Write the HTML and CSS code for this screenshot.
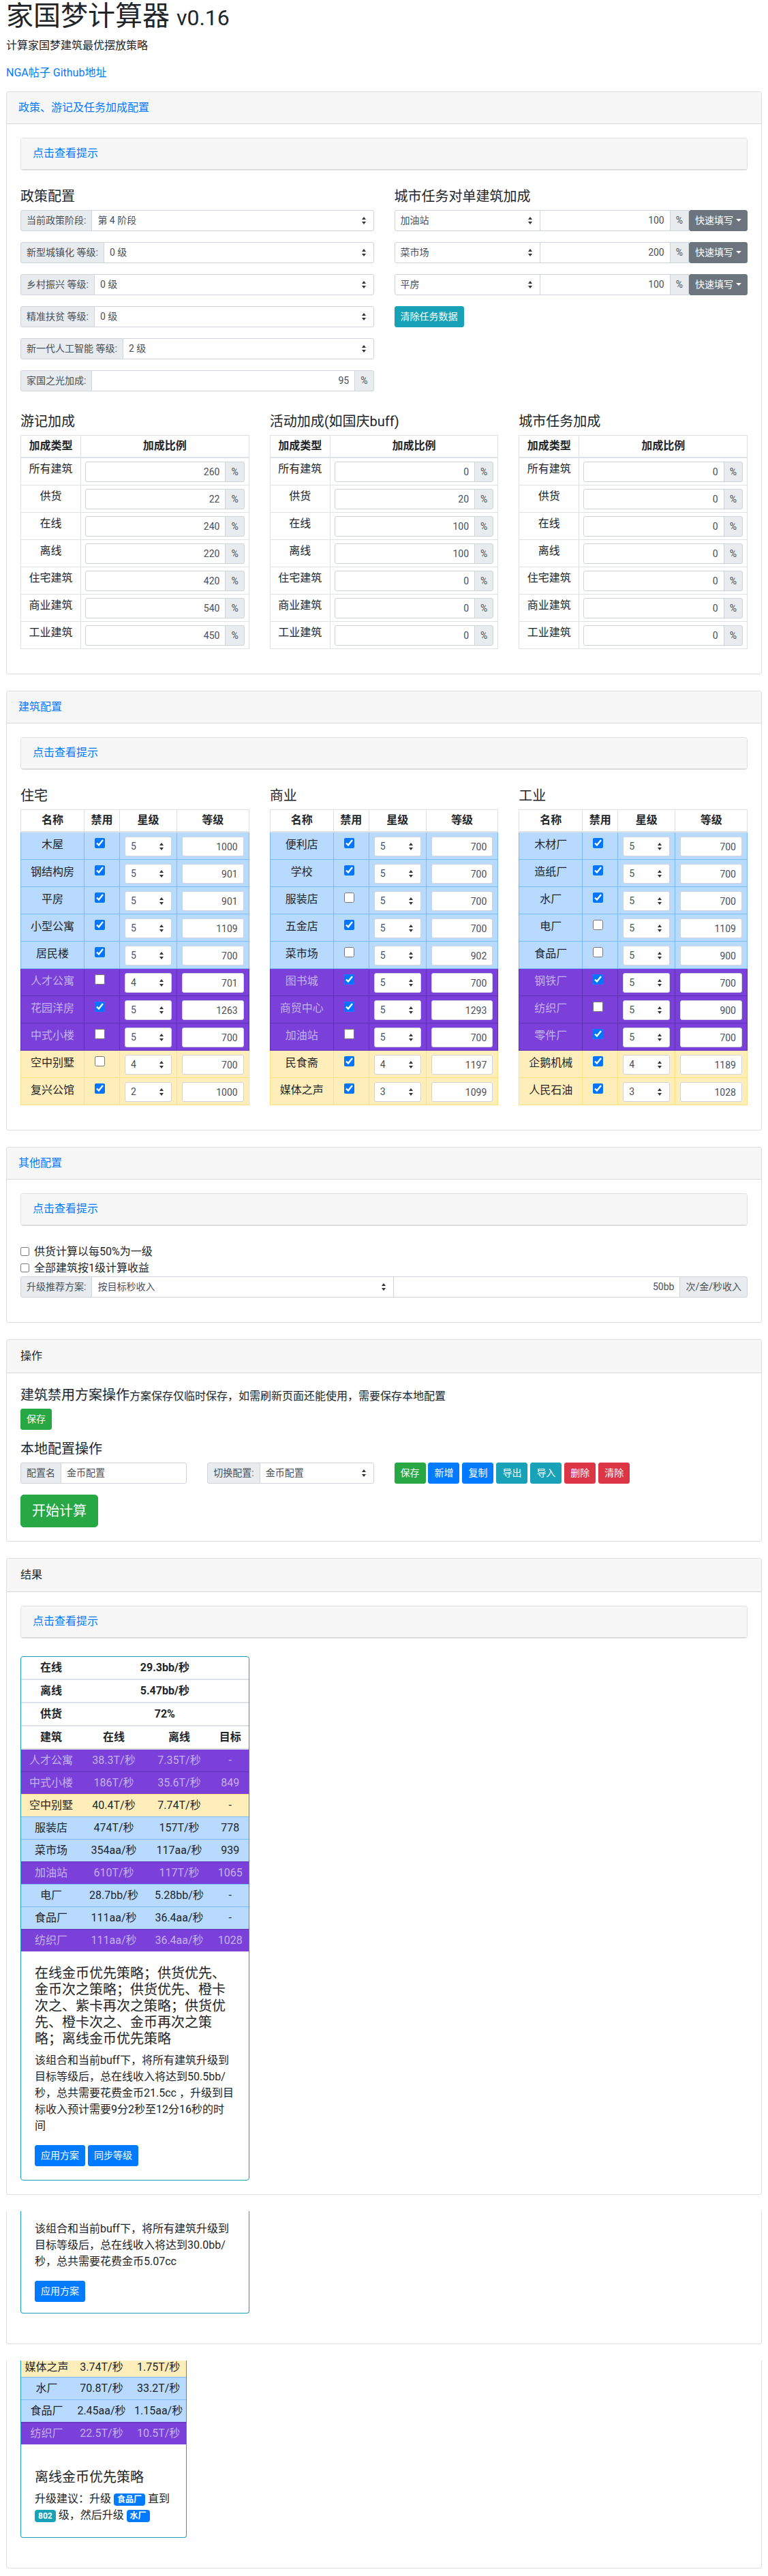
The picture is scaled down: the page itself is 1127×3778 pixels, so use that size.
FILE: index.html
```html
<!DOCTYPE html>
<html lang="zh-CN">
<head>
<meta charset="utf-8">
<title>家国梦计算器</title>
<link rel="stylesheet" href="styles.css">
</head>
<body>
<div class="page">
  <h1 class="title">家国梦计算器 <small>v0.16</small></h1>
  <p class="subtitle">计算家国梦建筑最优摆放策略</p>
  <p class="links"><a href="#">NGA帖子</a> <a href="#">Github地址</a></p>

  <!-- Card 1 -->
  <div class="card">
    <div class="card-header"><a href="#">政策、游记及任务加成配置</a></div>
    <div class="card-body">
      <div class="hint"><div class="hint-header"><a href="#">点击查看提示</a></div></div>
      <div class="grid2">
        <div>
          <h5>政策配置</h5>
          <div class="ig"><span class="ig-text">当前政策阶段:</span><span class="sw"><select><option>第 4 阶段</option></select></span></div>
          <div class="ig"><span class="ig-text">新型城镇化 等级:</span><span class="sw"><select><option>0 级</option></select></span></div>
          <div class="ig"><span class="ig-text">乡村振兴 等级:</span><span class="sw"><select><option>0 级</option></select></span></div>
          <div class="ig"><span class="ig-text">精准扶贫 等级:</span><span class="sw"><select><option>0 级</option></select></span></div>
          <div class="ig"><span class="ig-text">新一代人工智能 等级:</span><span class="sw"><select><option>2 级</option></select></span></div>
          <div class="ig"><span class="ig-text">家国之光加成:</span><input class="fc num" value="95"><span class="ig-text">%</span></div>
        </div>
        <div>
          <h5>城市任务对单建筑加成</h5>
          <div class="ig"><span class="sw task-sel"><select><option>加油站</option></select></span><input class="fc num" value="100"><span class="ig-text">%</span><button class="btn b-gray caret">快速填写</button></div>
          <div class="ig"><span class="sw task-sel"><select><option>菜市场</option></select></span><input class="fc num" value="200"><span class="ig-text">%</span><button class="btn b-gray caret">快速填写</button></div>
          <div class="ig"><span class="sw task-sel"><select><option>平房</option></select></span><input class="fc num" value="100"><span class="ig-text">%</span><button class="btn b-gray caret">快速填写</button></div>
          <button class="btn b-teal">清除任务数据</button>
        </div>
      </div>

      <div class="grid3 bonus-row">
        <div>
          <h5>游记加成</h5>
          <table class="tbl bonus">
            <colgroup><col class="cw-type"><col></colgroup>
            <thead><tr><th>加成类型</th><th>加成比例</th></tr></thead>
            <tbody>
              <tr><td class="tname">所有建筑</td><td><div class="ig cell"><input class="fc num" value="260"><span class="ig-text">%</span></div></td></tr>
              <tr><td class="tname">供货</td><td><div class="ig cell"><input class="fc num" value="22"><span class="ig-text">%</span></div></td></tr>
              <tr><td class="tname">在线</td><td><div class="ig cell"><input class="fc num" value="240"><span class="ig-text">%</span></div></td></tr>
              <tr><td class="tname">离线</td><td><div class="ig cell"><input class="fc num" value="220"><span class="ig-text">%</span></div></td></tr>
              <tr><td class="tname">住宅建筑</td><td><div class="ig cell"><input class="fc num" value="420"><span class="ig-text">%</span></div></td></tr>
              <tr><td class="tname">商业建筑</td><td><div class="ig cell"><input class="fc num" value="540"><span class="ig-text">%</span></div></td></tr>
              <tr><td class="tname">工业建筑</td><td><div class="ig cell"><input class="fc num" value="450"><span class="ig-text">%</span></div></td></tr>
            </tbody>
          </table>
        </div>
        <div>
          <h5>活动加成(如国庆buff)</h5>
          <table class="tbl bonus">
            <colgroup><col class="cw-type"><col></colgroup>
            <thead><tr><th>加成类型</th><th>加成比例</th></tr></thead>
            <tbody>
              <tr><td class="tname">所有建筑</td><td><div class="ig cell"><input class="fc num" value="0"><span class="ig-text">%</span></div></td></tr>
              <tr><td class="tname">供货</td><td><div class="ig cell"><input class="fc num" value="20"><span class="ig-text">%</span></div></td></tr>
              <tr><td class="tname">在线</td><td><div class="ig cell"><input class="fc num" value="100"><span class="ig-text">%</span></div></td></tr>
              <tr><td class="tname">离线</td><td><div class="ig cell"><input class="fc num" value="100"><span class="ig-text">%</span></div></td></tr>
              <tr><td class="tname">住宅建筑</td><td><div class="ig cell"><input class="fc num" value="0"><span class="ig-text">%</span></div></td></tr>
              <tr><td class="tname">商业建筑</td><td><div class="ig cell"><input class="fc num" value="0"><span class="ig-text">%</span></div></td></tr>
              <tr><td class="tname">工业建筑</td><td><div class="ig cell"><input class="fc num" value="0"><span class="ig-text">%</span></div></td></tr>
            </tbody>
          </table>
        </div>
        <div>
          <h5>城市任务加成</h5>
          <table class="tbl bonus">
            <colgroup><col class="cw-type"><col></colgroup>
            <thead><tr><th>加成类型</th><th>加成比例</th></tr></thead>
            <tbody>
              <tr><td class="tname">所有建筑</td><td><div class="ig cell"><input class="fc num" value="0"><span class="ig-text">%</span></div></td></tr>
              <tr><td class="tname">供货</td><td><div class="ig cell"><input class="fc num" value="0"><span class="ig-text">%</span></div></td></tr>
              <tr><td class="tname">在线</td><td><div class="ig cell"><input class="fc num" value="0"><span class="ig-text">%</span></div></td></tr>
              <tr><td class="tname">离线</td><td><div class="ig cell"><input class="fc num" value="0"><span class="ig-text">%</span></div></td></tr>
              <tr><td class="tname">住宅建筑</td><td><div class="ig cell"><input class="fc num" value="0"><span class="ig-text">%</span></div></td></tr>
              <tr><td class="tname">商业建筑</td><td><div class="ig cell"><input class="fc num" value="0"><span class="ig-text">%</span></div></td></tr>
              <tr><td class="tname">工业建筑</td><td><div class="ig cell"><input class="fc num" value="0"><span class="ig-text">%</span></div></td></tr>
            </tbody>
          </table>
        </div>
      </div>
    </div>
  </div>

  <!-- Card 2 -->
  <div class="card">
    <div class="card-header"><a href="#">建筑配置</a></div>
    <div class="card-body">
      <div class="hint"><div class="hint-header"><a href="#">点击查看提示</a></div></div>
      <div class="grid3">
        <div>
          <h5>住宅</h5>
          <table class="tbl bld">
            <colgroup><col class="cw-name"><col class="cw-dis"><col class="cw-star"><col></colgroup>
            <thead><tr><th>名称</th><th>禁用</th><th>星级</th><th>等级</th></tr></thead>
            <tbody>
              <tr class="r-blue"><td class="tname">木屋</td><td><input type="checkbox" class="chk" checked></td><td><span class="sw star"><select><option>5</option></select></span></td><td><input class="fc num lvl" value="1000"></td></tr>
              <tr class="r-blue"><td class="tname">钢结构房</td><td><input type="checkbox" class="chk" checked></td><td><span class="sw star"><select><option>5</option></select></span></td><td><input class="fc num lvl" value="901"></td></tr>
              <tr class="r-blue"><td class="tname">平房</td><td><input type="checkbox" class="chk" checked></td><td><span class="sw star"><select><option>5</option></select></span></td><td><input class="fc num lvl" value="901"></td></tr>
              <tr class="r-blue"><td class="tname">小型公寓</td><td><input type="checkbox" class="chk" checked></td><td><span class="sw star"><select><option>5</option></select></span></td><td><input class="fc num lvl" value="1109"></td></tr>
              <tr class="r-blue"><td class="tname">居民楼</td><td><input type="checkbox" class="chk" checked></td><td><span class="sw star"><select><option>5</option></select></span></td><td><input class="fc num lvl" value="700"></td></tr>
              <tr class="r-purple"><td class="tname">人才公寓</td><td><input type="checkbox" class="chk"></td><td><span class="sw star"><select><option>4</option></select></span></td><td><input class="fc num lvl" value="701"></td></tr>
              <tr class="r-purple"><td class="tname">花园洋房</td><td><input type="checkbox" class="chk" checked></td><td><span class="sw star"><select><option>5</option></select></span></td><td><input class="fc num lvl" value="1263"></td></tr>
              <tr class="r-purple"><td class="tname">中式小楼</td><td><input type="checkbox" class="chk"></td><td><span class="sw star"><select><option>5</option></select></span></td><td><input class="fc num lvl" value="700"></td></tr>
              <tr class="r-yellow"><td class="tname">空中别墅</td><td><input type="checkbox" class="chk"></td><td><span class="sw star"><select><option>4</option></select></span></td><td><input class="fc num lvl" value="700"></td></tr>
              <tr class="r-yellow"><td class="tname">复兴公馆</td><td><input type="checkbox" class="chk" checked></td><td><span class="sw star"><select><option>2</option></select></span></td><td><input class="fc num lvl" value="1000"></td></tr>
            </tbody>
          </table>
        </div>
        <div>
          <h5>商业</h5>
          <table class="tbl bld">
            <colgroup><col class="cw-name"><col class="cw-dis"><col class="cw-star"><col></colgroup>
            <thead><tr><th>名称</th><th>禁用</th><th>星级</th><th>等级</th></tr></thead>
            <tbody>
              <tr class="r-blue"><td class="tname">便利店</td><td><input type="checkbox" class="chk" checked></td><td><span class="sw star"><select><option>5</option></select></span></td><td><input class="fc num lvl" value="700"></td></tr>
              <tr class="r-blue"><td class="tname">学校</td><td><input type="checkbox" class="chk" checked></td><td><span class="sw star"><select><option>5</option></select></span></td><td><input class="fc num lvl" value="700"></td></tr>
              <tr class="r-blue"><td class="tname">服装店</td><td><input type="checkbox" class="chk"></td><td><span class="sw star"><select><option>5</option></select></span></td><td><input class="fc num lvl" value="700"></td></tr>
              <tr class="r-blue"><td class="tname">五金店</td><td><input type="checkbox" class="chk" checked></td><td><span class="sw star"><select><option>5</option></select></span></td><td><input class="fc num lvl" value="700"></td></tr>
              <tr class="r-blue"><td class="tname">菜市场</td><td><input type="checkbox" class="chk"></td><td><span class="sw star"><select><option>5</option></select></span></td><td><input class="fc num lvl" value="902"></td></tr>
              <tr class="r-purple"><td class="tname">图书城</td><td><input type="checkbox" class="chk" checked></td><td><span class="sw star"><select><option>5</option></select></span></td><td><input class="fc num lvl" value="700"></td></tr>
              <tr class="r-purple"><td class="tname">商贸中心</td><td><input type="checkbox" class="chk" checked></td><td><span class="sw star"><select><option>5</option></select></span></td><td><input class="fc num lvl" value="1293"></td></tr>
              <tr class="r-purple"><td class="tname">加油站</td><td><input type="checkbox" class="chk"></td><td><span class="sw star"><select><option>5</option></select></span></td><td><input class="fc num lvl" value="700"></td></tr>
              <tr class="r-yellow"><td class="tname">民食斋</td><td><input type="checkbox" class="chk" checked></td><td><span class="sw star"><select><option>4</option></select></span></td><td><input class="fc num lvl" value="1197"></td></tr>
              <tr class="r-yellow"><td class="tname">媒体之声</td><td><input type="checkbox" class="chk" checked></td><td><span class="sw star"><select><option>3</option></select></span></td><td><input class="fc num lvl" value="1099"></td></tr>
            </tbody>
          </table>
        </div>
        <div>
          <h5>工业</h5>
          <table class="tbl bld">
            <colgroup><col class="cw-name"><col class="cw-dis"><col class="cw-star"><col></colgroup>
            <thead><tr><th>名称</th><th>禁用</th><th>星级</th><th>等级</th></tr></thead>
            <tbody>
              <tr class="r-blue"><td class="tname">木材厂</td><td><input type="checkbox" class="chk" checked></td><td><span class="sw star"><select><option>5</option></select></span></td><td><input class="fc num lvl" value="700"></td></tr>
              <tr class="r-blue"><td class="tname">造纸厂</td><td><input type="checkbox" class="chk" checked></td><td><span class="sw star"><select><option>5</option></select></span></td><td><input class="fc num lvl" value="700"></td></tr>
              <tr class="r-blue"><td class="tname">水厂</td><td><input type="checkbox" class="chk" checked></td><td><span class="sw star"><select><option>5</option></select></span></td><td><input class="fc num lvl" value="700"></td></tr>
              <tr class="r-blue"><td class="tname">电厂</td><td><input type="checkbox" class="chk"></td><td><span class="sw star"><select><option>5</option></select></span></td><td><input class="fc num lvl" value="1109"></td></tr>
              <tr class="r-blue"><td class="tname">食品厂</td><td><input type="checkbox" class="chk"></td><td><span class="sw star"><select><option>5</option></select></span></td><td><input class="fc num lvl" value="900"></td></tr>
              <tr class="r-purple"><td class="tname">钢铁厂</td><td><input type="checkbox" class="chk" checked></td><td><span class="sw star"><select><option>5</option></select></span></td><td><input class="fc num lvl" value="700"></td></tr>
              <tr class="r-purple"><td class="tname">纺织厂</td><td><input type="checkbox" class="chk"></td><td><span class="sw star"><select><option>5</option></select></span></td><td><input class="fc num lvl" value="900"></td></tr>
              <tr class="r-purple"><td class="tname">零件厂</td><td><input type="checkbox" class="chk" checked></td><td><span class="sw star"><select><option>5</option></select></span></td><td><input class="fc num lvl" value="700"></td></tr>
              <tr class="r-yellow"><td class="tname">企鹅机械</td><td><input type="checkbox" class="chk" checked></td><td><span class="sw star"><select><option>4</option></select></span></td><td><input class="fc num lvl" value="1189"></td></tr>
              <tr class="r-yellow"><td class="tname">人民石油</td><td><input type="checkbox" class="chk" checked></td><td><span class="sw star"><select><option>3</option></select></span></td><td><input class="fc num lvl" value="1028"></td></tr>
            </tbody>
          </table>
        </div>
      </div>
    </div>
  </div>

  <!-- Card 3 -->
  <div class="card">
    <div class="card-header"><a href="#">其他配置</a></div>
    <div class="card-body">
      <div class="hint"><div class="hint-header"><a href="#">点击查看提示</a></div></div>
      <label class="check"><input type="checkbox" class="chk-sm"><span>供货计算以每50%为一级</span></label>
      <label class="check"><input type="checkbox" class="chk-sm"><span>全部建筑按1级计算收益</span></label>
      <div class="ig"><span class="ig-text">升级推荐方案:</span><span class="sw plan-sel"><select><option>按目标秒收入</option></select></span><input class="fc num" value="50bb"><span class="ig-text">次/金/秒收入</span></div>
    </div>
  </div>

  <!-- Card 4 -->
  <div class="card">
    <div class="card-header plain">操作</div>
    <div class="card-body">
      <h5>建筑禁用方案操作<small>方案保存仅临时保存，如需刷新页面还能使用，需要保存本地配置</small></h5>
      <div class="btn-line"><button class="btn b-green">保存</button></div>
      <h5>本地配置操作</h5>
      <div class="grid4 ops">
        <div class="ig"><span class="ig-text">配置名</span><input class="fc" value="金币配置"></div>
        <div class="ig"><span class="ig-text">切换配置:</span><span class="sw"><select><option>金币配置</option></select></span></div>
        <div class="span2 ops-btns"><button class="btn b-green">保存</button> <button class="btn b-blue">新增</button> <button class="btn b-blue">复制</button> <button class="btn b-teal">导出</button> <button class="btn b-teal">导入</button> <button class="btn b-red">删除</button> <button class="btn b-red">清除</button></div>
      </div>
      <button class="btn btn-lg b-green">开始计算</button>
    </div>
  </div>

  <!-- Card 5 -->
  <div class="card">
    <div class="card-header plain">结果</div>
    <div class="card-body">
      <div class="hint"><div class="hint-header"><a href="#">点击查看提示</a></div></div>
      <div class="grid3">
        <div class="rcard">
          <table class="rtable">
            <colgroup><col class="rc1"><col class="rc2"><col class="rc3"><col></colgroup>
            <tr class="rh"><th>在线</th><th colspan="3">29.3bb/秒</th></tr>
            <tr class="rh"><th>离线</th><th colspan="3">5.47bb/秒</th></tr>
            <tr class="rh"><th>供货</th><th colspan="3">72%</th></tr>
            <tr class="rh"><th>建筑</th><th>在线</th><th>离线</th><th>目标</th></tr>
            <tr class="r-purple"><td>人才公寓</td><td>38.3T/秒</td><td>7.35T/秒</td><td>-</td></tr>
            <tr class="r-purple"><td>中式小楼</td><td>186T/秒</td><td>35.6T/秒</td><td>849</td></tr>
            <tr class="r-yellow"><td>空中别墅</td><td>40.4T/秒</td><td>7.74T/秒</td><td>-</td></tr>
            <tr class="r-blue"><td>服装店</td><td>474T/秒</td><td>157T/秒</td><td>778</td></tr>
            <tr class="r-blue"><td>菜市场</td><td>354aa/秒</td><td>117aa/秒</td><td>939</td></tr>
            <tr class="r-purple"><td>加油站</td><td>610T/秒</td><td>117T/秒</td><td>1065</td></tr>
            <tr class="r-blue"><td>电厂</td><td>28.7bb/秒</td><td>5.28bb/秒</td><td>-</td></tr>
            <tr class="r-blue"><td>食品厂</td><td>111aa/秒</td><td>36.4aa/秒</td><td>-</td></tr>
            <tr class="r-purple"><td>纺织厂</td><td>111aa/秒</td><td>36.4aa/秒</td><td>1028</td></tr>
          </table>
          <div class="rbody">
            <h5>在线金币优先策略；供货优先、金币次之策略；供货优先、橙卡次之、紫卡再次之策略；供货优先、橙卡次之、金币再次之策略；离线金币优先策略</h5>
            <p class="rtext">该组合和当前buff下，将所有建筑升级到目标等级后，总在线收入将达到50.5bb/秒，总共需要花费金币21.5cc ，升级到目标收入预计需要9分2秒至12分16秒的时间</p>
            <button class="btn b-blue">应用方案</button> <button class="btn b-blue">同步等级</button>
          </div>
        </div>
      </div>
    </div>
  </div>

  <!-- Fragment 2 -->
  <div class="frag">
    <div class="grid3">
      <div class="rfrag">
        <p class="rtext">该组合和当前buff下，将所有建筑升级到目标等级后，总在线收入将达到30.0bb/秒，总共需要花费金币5.07cc</p>
        <div class="btn-line"><button class="btn b-blue">应用方案</button></div>
      </div>
    </div>
  </div>

  <!-- Fragment 3 -->
  <div class="frag">
    <div class="grid4">
      <div class="rfrag2">
        <table class="rtable ftable">
          <colgroup><col class="fc1"><col class="fc2"><col></colgroup>
          <tr class="r-yellow cut"><td>媒体之声</td><td>3.74T/秒</td><td>1.75T/秒</td></tr>
          <tr class="r-blue"><td>水厂</td><td>70.8T/秒</td><td>33.2T/秒</td></tr>
          <tr class="r-blue"><td>食品厂</td><td>2.45aa/秒</td><td>1.15aa/秒</td></tr>
          <tr class="r-purple"><td>纺织厂</td><td>22.5T/秒</td><td>10.5T/秒</td></tr>
        </table>
        <div class="rbody">
          <h5>离线金币优先策略</h5>
          <p>升级建议：升级 <span class="badge bg-blue">食品厂</span> 直到 <span class="badge bg-teal">802</span> 级，然后升级 <span class="badge bg-blue">水厂</span></p>
        </div>
      </div>
    </div>
  </div>
</div>
</body>
</html>
```

FILE: styles.css
```css
* { box-sizing: border-box; }
html, body { margin: 0; padding: 0; }
body {
  font-family: Roboto, "Noto Sans CJK SC", "Noto Sans", sans-serif;
  font-size: 16px;
  line-height: 1.5;
  color: #212529;
  background: #fff;
}
.page { padding: 0 9px 8px; }
a { color: #007bff; text-decoration: none; }
h1, h5, p { margin: 0; }

.title { font-size: 40px; font-weight: 400; line-height: 1.2; margin-bottom: 7px; }
.title small { font-size: 80%; font-weight: 400; }
.subtitle { margin-bottom: 16px; }
.links { margin-bottom: 15px; }

h5 { font-size: 20px; font-weight: 400; line-height: 1.2; margin-bottom: 8px; }
h5 small { font-size: 80%; font-weight: 400; }

/* cards */
.card { border: 1px solid rgba(0,0,0,.125); border-radius: 4px; margin-bottom: 24px; background: #fff; }
.card-header { background: #f7f7f7; border-bottom: 1px solid rgba(0,0,0,.125); padding: 11px 17px; border-radius: 3px 3px 0 0; }
.card-header.plain { padding: 12px 20px; }
.card-body { padding: 20px; }
.hint { border: 1px solid rgba(0,0,0,.125); border-radius: 4px; margin-bottom: 26px; }
.hint-header { background: #f7f7f7; border-bottom: 1px solid rgba(0,0,0,.125); padding: 10px 17px 11px; border-radius: 3px 3px 0 0; }

/* grids */
.grid2 { display: grid; grid-template-columns: 1fr 1fr; column-gap: 30px; }
.grid3 { display: grid; grid-template-columns: repeat(3, 1fr); column-gap: 30px; }
.grid4 { display: grid; grid-template-columns: repeat(4, 1fr); column-gap: 30px; }
.span2 { grid-column: span 2; }
.bonus-row { margin-top: 16px; }

/* form controls */
.fc {
  font-family: inherit;
  font-size: 14px;
  line-height: 1.5;
  color: #495057;
  background: #fff;
  border: 1px solid #ced4da;
  border-radius: 3px;
  height: 31px;
  padding: 4px 8px;
  min-width: 0;
  margin: 0;
}
.num { text-align: right; }

/* select wrapper with double arrow */
.sw {
  position: relative;
  display: block;
  border: 1px solid #ced4da;
  border-radius: 3px;
  background: #fff;
  min-width: 0;
}
.sw select {
  -webkit-appearance: none;
  appearance: none;
  display: block;
  width: 100%;
  height: 100%;
  border: none;
  background: transparent;
  font-family: inherit;
  font-size: 14px;
  line-height: 1.5;
  color: #495057;
  padding: 0 24px 0 8px;
  margin: 0;
  outline: none;
}
.sw::before, .sw::after {
  content: "";
  position: absolute;
  right: 11px;
  border-left: 3.5px solid transparent;
  border-right: 3.5px solid transparent;
  pointer-events: none;
}
.sw::before { top: calc(50% - 6px); border-bottom: 4.5px solid #333; }
.sw::after { top: calc(50% + 1px); border-top: 4.5px solid #333; }

.ig { display: flex; align-items: stretch; height: 31px; margin-bottom: 16px; font-size: 14px; line-height: 1.5; }
.ig > * { border: 1px solid #ced4da; border-radius: 0; margin: 0; }
.ig > * + * { margin-left: -1px; }
.ig > :first-child { border-top-left-radius: 3px; border-bottom-left-radius: 3px; }
.ig > :last-child { border-top-right-radius: 3px; border-bottom-right-radius: 3px; }
.ig .fc, .ig .sw { flex: 1 1 auto; width: 1%; height: auto; }
.ig .task-sel { flex: 0 0 214px; }
.ig .plan-sel { flex: 0 0 444px; }
.ig-text { display: flex; align-items: center; padding: 0 8px; background: #e9ecef; color: #495057; white-space: nowrap; }
.ig.cell { height: 30px; margin-bottom: 0; }

/* buttons */
.btn {
  display: inline-block;
  font-family: inherit;
  font-size: 14px;
  line-height: 1.5;
  color: #fff;
  border: 1px solid transparent;
  border-radius: 3px;
  padding: 4px 8px;
  margin: 0;
  cursor: pointer;
  vertical-align: middle;
}
.btn-lg { font-size: 20px; padding: 8px 16px; border-radius: 5px; }
.b-green { background: #28a745; border-color: #28a745; }
.b-blue { background: #007bff; border-color: #007bff; }
.b-teal { background: #17a2b8; border-color: #17a2b8; }
.b-red { background: #dc3545; border-color: #dc3545; }
.b-gray { background: #6c757d; border-color: #6c757d; }
.caret::after {
  content: "";
  display: inline-block;
  margin-left: 4px;
  vertical-align: 3px;
  border-top: 4px solid #fff;
  border-right: 4px solid transparent;
  border-left: 4px solid transparent;
}
.btn-line { margin-bottom: 16px; }
.ops .ig { margin-bottom: 16px; }
.ops-btns { font-size: 16px; }

/* checkboxes */
.check { display: block; position: relative; padding-left: 20px; line-height: 24px; }
.chk-sm { position: absolute; left: 0; top: 5px; width: 13px; height: 13px; margin: 0; }

/* tables */
.tbl { width: 100%; border-collapse: collapse; table-layout: fixed; margin-bottom: 16px; }
.tbl th, .tbl td { border: 1px solid #dee2e6; }
.tbl th { padding: 3px 4px 4px; line-height: 24px; text-align: center; font-weight: 700; border-bottom-width: 2px; }
.tbl td { vertical-align: top; }
.bonus td { padding: 5px 6px 4px; }
.bonus td.tname { padding-top: 4px; text-align: center; line-height: 24px; }
.cw-type { width: 88px; }
.bld td { padding: 6px 7px 4px; }
.bld td.tname { text-align: center; line-height: 24px; padding-top: 6px; white-space: nowrap; }
.cw-name { width: 93px; }
.cw-dis { width: 52px; }
.cw-star { width: 84px; }
.bld .fc { width: 100%; height: 29px; padding: 3px 8px; }
.bld .sw { width: 100%; height: 29px; }
.chk { width: 15px; height: 15px; margin: 2px 0 0 8px; display: block; }

.r-blue td { background: #b8daff; border-color: #7abaff; }
.r-yellow td { background: #ffeeba; border-color: #ffdf7e; }
.r-purple td { background: #7a40d9; border-color: #5e30b5; color: #c4b2ee; }

/* results */
.rcard { border: 1px solid #17a2b8; border-radius: 4px; overflow: hidden; }
.rtable { width: 100%; border-collapse: collapse; table-layout: fixed; }
.rtable th, .rtable td { padding: 4px; line-height: 24px; text-align: center; white-space: nowrap; }
.rtable .rh th { border-bottom: 2px solid #dee2e6; font-weight: 700; }
.rtable tr + tr td { border-top: 1px solid; }
.rtable .r-blue td { border-top-color: #7abaff; }
.rtable .r-yellow td { border-top-color: #ffdf7e; }
.rtable .r-purple td { border-top-color: #5e30b5; }
.rc1 { width: 88px; }
.rc2 { width: 96px; }
.rc3 { width: 96px; }
.rbody { padding: 20px; }
.rtext { margin-bottom: 16px; }

/* cut fragments */
.frag {
  border: 1px solid rgba(0,0,0,.125);
  border-top: none;
  border-radius: 0 0 4px 4px;
  padding: 0 20px 20px;
  margin-bottom: 24px;
}
.rfrag {
  border: 1px solid #17a2b8;
  border-top: none;
  border-radius: 0 0 4px 4px;
  padding: 14px 20px 0;
  margin-bottom: 24px;
}
.rfrag2 {
  border: 1px solid #17a2b8;
  border-top: none;
  border-radius: 0 0 4px 4px;
  margin-bottom: 24px;
}
.ftable { margin-bottom: 16px; }
.ftable .cut td { padding-top: 0; padding-bottom: 4px; line-height: 20px; }
.fc1 { width: 75px; }
.fc2 { width: 86px; }
.rfrag2 .rbody { padding-top: 20px; }

.badge {
  display: inline-block;
  padding: 3px 5px;
  font-size: 12px;
  font-weight: 700;
  line-height: 1;
  color: #fff;
  border-radius: 4px;
  white-space: nowrap;
  vertical-align: baseline;
}
.bg-blue { background: #007bff; }
.bg-teal { background: #17a2b8; }
```
